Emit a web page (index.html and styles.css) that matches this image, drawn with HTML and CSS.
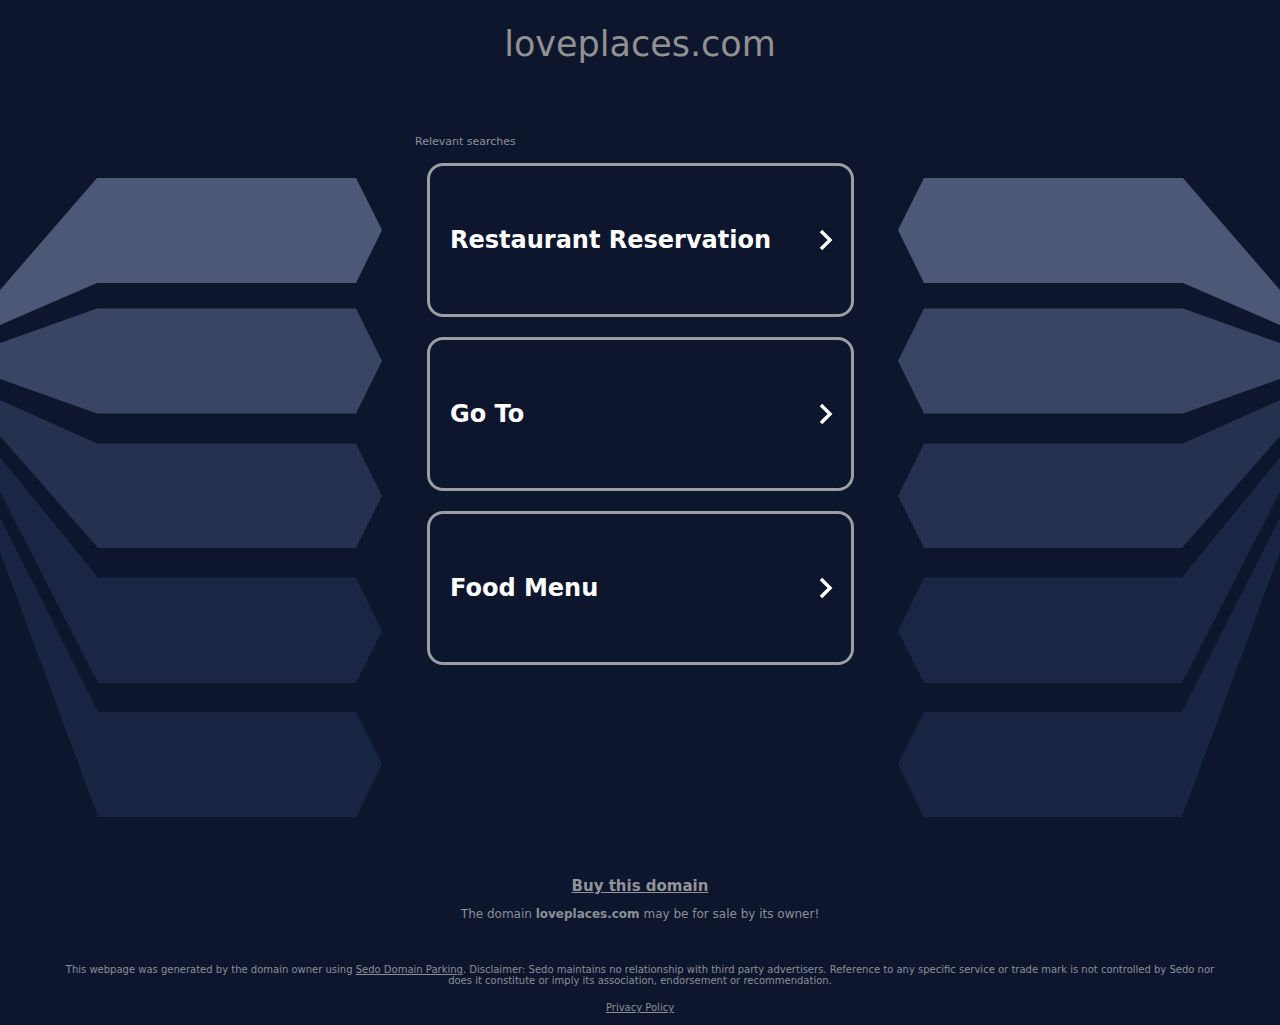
FILE: index.html
```html
<!DOCTYPE html>
<html lang="en">
<head>
<meta charset="utf-8">
<meta name="viewport" content="width=device-width, initial-scale=1">
<title>loveplaces.com</title>
<link rel="stylesheet" href="styles.css">
</head>
<body>
<svg class="defs" width="0" height="0" aria-hidden="true">
  <symbol id="arms" viewBox="0 0 382 639">
    <path fill="#4d5876" d="M0 112 97 0H356L382 52 356 105H97L0 147Z"/>
    <path fill="#3a4463" d="M0 165 97 130.500H356L382 183 356 235.500H97L0 201Z"/>
    <path fill="#26304f" d="M0 222 97 265.500H356L382 318 356 370H98L0 258Z"/>
    <path fill="#1b2544" d="M0 279 98 399.500H356L382 453 356 505H98L0 314Z"/>
    <path fill="#1a2443" d="M0 339 98 534H356L382 586 356 639H98L0 374Z"/>
  </symbol>
  <symbol id="chevron" viewBox="0 0 14 22">
    <path fill="none" stroke="#fff" stroke-width="3.400" d="M2 2 11 11 2 20"/>
  </symbol>
</svg>
<header class="header">
  <h1 class="title">loveplaces.com</h1>
</header>
<main class="main">
  <svg class="art" aria-hidden="true"><use href="#arms"/></svg>
  <section class="searches">
    <h2 class="label">Relevant searches</h2>
    <nav class="cards">
      <a class="card" href="#"><span>Restaurant Reservation</span><svg class="chevron" aria-hidden="true"><use href="#chevron"/></svg></a>
      <a class="card" href="#"><span>Go To</span><svg class="chevron" aria-hidden="true"><use href="#chevron"/></svg></a>
      <a class="card" href="#"><span>Food Menu</span><svg class="chevron" aria-hidden="true"><use href="#chevron"/></svg></a>
    </nav>
  </section>
  <svg class="art art-right" aria-hidden="true"><use href="#arms"/></svg>
</main>
<section class="sale">
  <a class="buy" href="#">Buy this domain</a>
  <p class="owner">The domain <strong>loveplaces.com</strong> may be for sale by its owner!</p>
</section>
<footer class="footer">
  <p class="disclaimer">This webpage was generated by the domain owner using <a href="#">Sedo Domain Parking</a>. Disclaimer: Sedo maintains no relationship with third party advertisers. Reference to any specific service or trade mark is not controlled by Sedo nor does it constitute or imply its association, endorsement or recommendation.</p>
  <a class="privacy" href="#">Privacy Policy</a>
</footer>
</body>
</html>
```
FILE: styles.css
```css
* { box-sizing: border-box; }
body {
  margin: 0;
  background: #0e162e;
  color: #8b8f98;
  font-family: "DejaVu Sans", Verdana, sans-serif;
}
a { color: inherit; }
.defs { display: block; }
.header { padding: 24px 16px; text-align: center; }
.title {
  margin: 0;
  color: #919191;
  font-size: 35px;
  font-weight: 400;
  line-height: 40px;
}
.main {
  display: grid;
  grid-template-columns: 1fr 450px 1fr;
  padding-top: 46px;
}
.art { width: 382px; height: 639px; margin-top: 44px; }
.art-right { justify-self: end; transform: scaleX(-1); }
.label {
  margin: 0;
  font-size: 11px;
  font-weight: 400;
  line-height: 16px;
}
.cards {
  display: flex;
  flex-direction: column;
  gap: 20px;
  padding: 13px 11px 0 12px;
}
.card {
  display: flex;
  align-items: center;
  justify-content: space-between;
  min-height: 154px;
  padding: 0 18px 0 20px;
  border: 3px solid #9b9ea3;
  border-radius: 16px;
  color: #fff;
  font-size: 24px;
  font-weight: 700;
  line-height: 28px;
  text-decoration: none;
}
.chevron { width: 14px; height: 22px; }
.sale {
  display: flex;
  flex-direction: column;
  align-items: center;
  gap: 12px;
  padding: 60px 16px 0;
}
.buy {
  color: #919499;
  font-size: 15px;
  font-weight: 700;
  line-height: 18px;
}
.owner { margin: 0; font-size: 12px; line-height: 14px; }
.footer {
  padding: 43px 64px 12px;
  font-size: 10px;
  line-height: 11px;
  text-align: center;
}
.disclaimer { margin: 0 0 16px; }
.privacy { display: block; }
```
